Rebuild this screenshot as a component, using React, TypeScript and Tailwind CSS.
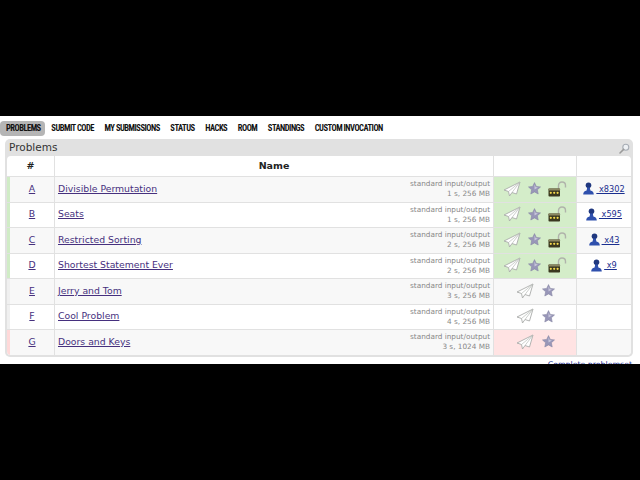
const TABS = ['PROBLEMS', 'SUBMIT CODE', 'MY SUBMISSIONS', 'STATUS', 'HACKS', 'ROOM', 'STANDINGS', 'CUSTOM INVOCATION'];

type Problem = {
  id: string;
  name: string;
  limits: string;
  status: 'ok' | 'bad' | 'none';
  solved: string;
};

const PROBLEMS: Problem[] = [
  { id: 'A', name: 'Divisible Permutation', limits: '1 s, 256 MB', status: 'ok', solved: 'x8302' },
  { id: 'B', name: 'Seats', limits: '1 s, 256 MB', status: 'ok', solved: 'x595' },
  { id: 'C', name: 'Restricted Sorting', limits: '2 s, 256 MB', status: 'ok', solved: 'x43' },
  { id: 'D', name: 'Shortest Statement Ever', limits: '2 s, 256 MB', status: 'ok', solved: 'x9' },
  { id: 'E', name: 'Jerry and Tom', limits: '3 s, 256 MB', status: 'none', solved: '' },
  { id: 'F', name: 'Cool Problem', limits: '4 s, 256 MB', status: 'none', solved: '' },
  { id: 'G', name: 'Doors and Keys', limits: '3 s, 1024 MB', status: 'bad', solved: '' },
];

function PlaneIcon() {
  return (
    <svg width="18" height="16" viewBox="0 0 18 16" fill="none">
      <path d="M17 1 L1 9 L5.5 10.5 L6.5 15 L9 11.5 L13.5 13 Z" fill="#ffffff" stroke="#a9aca9" strokeWidth="0.9" strokeLinejoin="round" />
      <path d="M17 1 L5.5 10.5 M17 1 L9 11.5" stroke="#b8bbb8" strokeWidth="0.7" />
    </svg>
  );
}

function StarIcon() {
  return (
    <svg width="13" height="13" viewBox="0 0 13 13">
      <path d="M6.5 0.6 L8.3 4.4 L12.5 4.9 L9.4 7.8 L10.2 12 L6.5 9.9 L2.8 12 L3.6 7.8 L0.5 4.9 L4.7 4.4 Z" fill="#9896b8" stroke="#8a89a6" strokeWidth="0.6" strokeLinejoin="round" />
      <path d="M6.5 2.2 L7.6 5 L10 5.4 L6.5 7.4 Z" fill="#c8c7dc" />
    </svg>
  );
}

function LockIcon() {
  return (
    <svg width="19" height="16" viewBox="0 0 19 16" fill="none">
      <path d="M10.5 8 V4.5 C10.5 2.2 12 1 14 1 C16 1 17.5 2.2 17.5 4.5 V6.5" stroke="#b0b3ab" strokeWidth="1.4" />
      <rect x="0.5" y="7.5" width="11.5" height="8" rx="0.8" fill="#3a3820" />
      <rect x="0.5" y="7.5" width="11.5" height="2" fill="#8b8762" />
      <circle cx="2.8" cy="11.8" r="1.1" fill="#f4d94e" />
      <circle cx="6.2" cy="11.8" r="1.1" fill="#f4d94e" />
      <circle cx="9.6" cy="11.8" r="1.1" fill="#f4d94e" />
    </svg>
  );
}

function UserIcon() {
  return (
    <svg width="11" height="13" viewBox="0 0 11 13">
      <circle cx="5.5" cy="3.2" r="2.8" fill="#20387f" />
      <path d="M4.2 5.5 H6.8 L7.4 8.4 C9.5 8.8 10.8 9.8 10.8 12.6 H0.2 C0.2 9.8 1.5 8.8 3.6 8.4 Z" fill="#2f50ad" />
    </svg>
  );
}

function SearchIcon() {
  return (
    <svg width="11" height="11" viewBox="0 0 11 11" fill="none">
      <circle cx="6.8" cy="4.2" r="3" stroke="#a7adb5" strokeWidth="1.1" fill="#eef1f4" />
      <path d="M4.6 6.4 L1 10" stroke="#9a9a9a" strokeWidth="1.5" strokeLinecap="round" />
    </svg>
  );
}

export default function App() {
  return (
    <div className="flex h-[480px] w-[640px] flex-col overflow-hidden bg-black font-['DejaVu_Sans',sans-serif]">
      <div className="mt-[116px] h-[248px] overflow-hidden bg-white">
        <div className="flex h-[23px] items-center pt-px">
          {TABS.map((tab, i) => (
            <span
              key={tab}
              className={`rounded-[4px] py-[2.5px] pr-[4.6px] pl-[6px] font-['Roboto_Condensed','Liberation_Sans_Narrow','Roboto',sans-serif] text-[8.5px] leading-[10px] font-bold tracking-[-0.5px] whitespace-nowrap text-[#111] ${
                i === 0 ? 'bg-[#b5b5b5]' : ''
              }`}
            >
              {tab}
            </span>
          ))}
        </div>

        <div className="mx-[5px] w-[628px] rounded-[5px] bg-[#e1e1e1] pr-[2px] pb-[2px] pl-[2px]">
          <div className="flex h-[17px] items-center justify-between pt-[1px] pr-[1px] pl-[2px] text-[10.5px] text-[#333]">
            <span>Problems</span>
            <SearchIcon />
          </div>
          <div className="overflow-hidden rounded-[4px] bg-white">
            <div className="grid h-[20px] grid-cols-[48px_1fr_83px_54px] text-[9.5px] font-bold text-[#222]">
              <div className="flex items-center justify-center border-r border-[#e1e1e1]">#</div>
              <div className="flex items-center justify-center border-r border-[#e1e1e1]">Name</div>
              <div className="border-r border-[#e1e1e1]" />
              <div />
            </div>
            {PROBLEMS.map((p, i) => (
              <div
                key={p.id}
                className={`grid h-[25.5px] grid-cols-[48px_1fr_83px_54px] border-t border-[#e1e1e1] ${
                  i % 2 === 0 ? 'bg-[#f8f8f8]' : 'bg-white'
                }`}
              >
                <div
                  className={`flex items-center justify-center border-r border-l-[3px] border-r-[#e1e1e1] pb-[1px] text-[9.3px] text-[#46307e] underline ${
                    p.status === 'ok' ? 'border-l-[#d0ecc6]' : p.status === 'bad' ? 'border-l-[#ffd9d9]' : 'border-l-[#f0f0f0]'
                  }`}
                >
                  {p.id}
                </div>
                <div className="flex items-center justify-between border-r border-[#e1e1e1] pr-[3px] pl-[3px]">
                  <span className="pb-[1px] text-[9.3px] text-[#46307e] underline">{p.name}</span>
                  <div className="text-right text-[7.3px] leading-[10px] text-[#888]">
                    <div>standard input/output</div>
                    <div>{p.limits}</div>
                  </div>
                </div>
                <div
                  className={`flex items-center justify-center border-r border-[#e1e1e1] pb-[1px] ${
                    p.status === 'ok' ? 'gap-[7px] bg-[#d4edc9]' : p.status === 'bad' ? 'gap-[8px] bg-[#ffe3e3]' : 'gap-[8px]'
                  }`}
                >
                  <PlaneIcon />
                  <StarIcon />
                  {p.status === 'ok' && <LockIcon />}
                </div>
                <div className="flex items-center justify-center pb-[1px] text-[8.2px] text-[#1a2f8f]">
                  {p.solved && <UserIcon />}
                  {p.solved && <span className="pl-[2px] underline">{'\u00a0' + p.solved}</span>}
                </div>
              </div>
            ))}
          </div>
        </div>
        <div className="mt-[3px] pr-[8px] text-right text-[7.8px] leading-[10px] text-[#1a2f8f] underline">Complete problemset</div>
      </div>
    </div>
  );
}
